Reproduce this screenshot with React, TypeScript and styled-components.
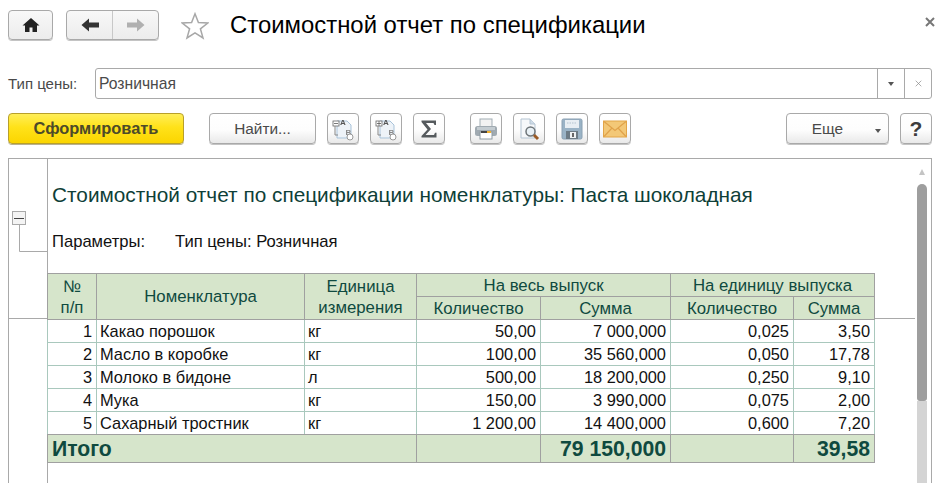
import React from "react";
import styled, { createGlobalStyle } from "styled-components";

const GlobalStyle = createGlobalStyle`
  html, body {
    margin: 0;
    padding: 0;
    background: #fff;
    overflow: hidden;
  }
  body {
    font-family: "Liberation Sans", Arial, sans-serif;
  }
`;

const Page = styled.div`
  width: 944px;
  height: 483px;
  overflow: hidden;
  padding: 10px 12px 0 8px;
  box-sizing: border-box;
  display: flex;
  flex-direction: column;
`;

const Header = styled.div`
  display: flex;
  align-items: center;
  height: 30px;
`;

const Btn = styled.button<{ $w?: number; $gap?: number }>`
  width: ${(p) => (p.$w ? `${p.$w}px` : "auto")};
  height: 31px;
  margin-left: ${(p) => p.$gap ?? 0}px;
  padding: 0;
  box-sizing: border-box;
  display: inline-flex;
  align-items: center;
  justify-content: center;
  flex: none;
  background: linear-gradient(#ffffff 0%, #fdfdfd 55%, #e9e9e9 100%);
  border: 1px solid #a9a9a9;
  border-radius: 4px;
  box-shadow: 0 1px 0 #c4c4c4;
  font: 15.4px "Liberation Sans", Arial, sans-serif;
  color: #4a4a4a;
`;

const HomeBtn = styled(Btn)`
  height: 30px;
  background: linear-gradient(#f8f8f8, #ececec);
`;

const NavGroup = styled.div`
  display: flex;
  width: 93px;
  height: 30px;
  margin-left: 13px;
  box-sizing: border-box;
  border: 1px solid #a9a9a9;
  border-radius: 4px;
  background: linear-gradient(#f8f8f8, #ececec);
  box-shadow: 0 1px 0 #c4c4c4;
`;

const NavCell = styled.div<{ $divider?: boolean }>`
  flex: 1;
  display: flex;
  align-items: center;
  justify-content: center;
  border-left: ${(p) => (p.$divider ? "1px solid #c8c8c8" : "none")};
`;

const StarWrap = styled.div`
  display: flex;
  margin-left: 22px;
  margin-top: 2px;
`;

const Title = styled.h1`
  margin: 0 0 0 21px;
  font-size: 23.9px;
  font-weight: 400;
  color: #000;
  white-space: nowrap;
`;

const CloseMark = styled.div`
  margin-left: auto;
  margin-right: -3px;
  margin-top: -6px;
  display: flex;
`;

const FilterRow = styled.div`
  display: flex;
  align-items: center;
  height: 31px;
  margin-top: 28px;
`;

const FieldLabel = styled.label`
  width: 87px;
  flex: none;
  font-size: 15px;
  color: #4a4a4a;
`;

const Field = styled.div`
  flex: 1;
  height: 31px;
  box-sizing: border-box;
  display: flex;
  align-items: stretch;
  border: 1px solid #a9a9a9;
  border-radius: 3px;
`;

const FieldValue = styled.div`
  flex: 1;
  padding-left: 3px;
  display: flex;
  align-items: center;
  font-size: 15.7px;
  color: #4a4a4a;
`;

const FieldAction = styled.div`
  width: 26px;
  display: flex;
  align-items: center;
  justify-content: center;
  border-left: 1px solid #a9a9a9;
`;

const ActionRow = styled.div`
  display: flex;
  align-items: center;
  margin-top: 14px;
  height: 31px;
`;

const PrimaryBtn = styled(Btn)`
  background: linear-gradient(#ffee58 0%, #ffe21a 45%, #fbd500 100%);
  border-color: #b8a02a;
  box-shadow: 0 1px 0 #b9b190;
  font-size: 16.4px;
  font-weight: 700;
  color: #4c4a2a;
`;

const IconBtn = styled(Btn)`
  width: 32px;
`;

const Spacer = styled.div`
  flex: 1;
`;

const MoreBtn = styled(Btn)`
  position: relative;
  padding-right: 20px;
`;

const MoreCaret = styled.span`
  position: absolute;
  right: 7px;
  top: 15px;
  border: 3.5px solid transparent;
  border-top: 4px solid #555;
  border-bottom: 0;
`;

const HelpBtn = styled(Btn)`
  font-size: 21px;
  font-weight: 700;
  color: #3d3d3d;
`;

const ReportFrame = styled.div`
  position: relative;
  flex: 1;
  margin-top: 14px;
  display: flex;
  border: 1px solid #a9a9a9;
  border-bottom: none;
  width: 924px;
  box-sizing: border-box;
`;

const OutlineRule = styled.div`
  position: absolute;
  top: 159px;
  left: 0;
  width: 906px;
  height: 1px;
  background: #a9a9a9;
`;

const Gutter = styled.div`
  width: 39px;
  flex: none;
  box-sizing: border-box;
  border-right: 1px solid #a9a9a9;
  padding-top: 52px;
  padding-left: 3px;
`;

const ReportBody = styled.div`
  position: relative;
  flex: 1;
  min-width: 0;
`;

const ReportTitle = styled.div`
  margin: 24px 0 0 4px;
  font-size: 20.8px;
  line-height: 24px;
  color: #0f3f38;
  white-space: nowrap;
`;

const Params = styled.div`
  display: flex;
  margin: 25px 0 0 4px;
  font-size: 16.6px;
  line-height: 19px;
  color: #111;
`;

const ParamName = styled.span`
  width: 123px;
`;

const Table = styled.table`
  position: relative;
  margin: 22px 0 0 -1px;
  width: 828px;
  table-layout: fixed;
  border-collapse: collapse;
  font-size: 16.4px;
`;

const Th = styled.th`
  height: 22px;
  padding: 0;
  font-size: 16.8px;
  font-weight: 400;
  background: #d6e5cb;
  color: #0f4a3f;
  border: 1px solid #a0a0a0;
  text-align: center;
  line-height: 21px;
`;

const Td = styled.td<{ $right?: boolean }>`
  height: 22px;
  padding: 0 4px 0 3px;
  line-height: 20px;
  background: #fff;
  color: #111;
  border: 1px solid #a9c8bd;
  text-align: ${(p) => (p.$right ? "right" : "left")};
  white-space: nowrap;
`;

const BodyRow = styled.tr`
  &:first-child td {
    border-top-color: #a0a0a0;
  }
  &:last-child td {
    border-bottom-color: #a0a0a0;
  }
`;

const TotalCell = styled.td<{ $right?: boolean }>`
  height: 27px;
  padding: 0 4px;
  line-height: 24px;
  background: #d6e5cb;
  color: #0f4a3f;
  border: 1px solid #a0a0a0;
  font-size: 21.2px;
  font-weight: 700;
  text-align: ${(p) => (p.$right ? "right" : "left")};
  white-space: nowrap;
`;

const Scroll = styled.div`
  width: 10px;
  flex: none;
  margin-right: 4px;
  margin-left: 3px;
  display: flex;
  flex-direction: column;
  align-items: center;
`;

const ScrollUp = styled.div`
  margin-top: 10px;
  border: 3.5px solid transparent;
  border-bottom: 6px solid #c4c4c4;
  border-top: 0;
`;

const ScrollThumb = styled.div`
  margin-top: 9px;
  width: 100%;
  height: 217px;
  background: #9e9e9e;
  border-radius: 5px 5px 3px 3px;
  flex: none;
`;

const ScrollTrack = styled.div`
  width: 100%;
  flex: 1;
  background: #d4d4d4;
`;

const SoftIcon = styled.svg`
  display: block;
  filter: blur(0.45px);
`;

const HomeIcon = () => (
  <SoftIcon width="18" height="16" viewBox="0 0 18 16">
    <path d="M9 1 L17.5 8.5 H15 V15 H10.5 V10.5 H7.5 V15 H3 V8.5 H.5 Z" fill="#222" />
  </SoftIcon>
);

const ArrowIcon = ({ right, color }: { right?: boolean; color: string }) => (
  <SoftIcon width="18" height="14" viewBox="0 0 18 14" style={right ? { transform: "scaleX(-1)" } : undefined}>
    <path d="M8 .5 V4.5 H18 V9.5 H8 V13.5 L.5 7 Z" fill={color} />
  </SoftIcon>
);

const StarIcon = () => (
  <svg width="28" height="28" viewBox="0 0 28 28" style={{ display: "block" }}>
    <path
      d="M14 1.8 L17.4 10.6 L26.8 11 L19.4 16.8 L22 26 L14 20.8 L6 26 L8.6 16.8 L1.2 11 L10.6 10.6 Z"
      fill="#fff"
      stroke="#a8a8a8"
      strokeWidth="1.5"
      strokeLinejoin="miter"
    />
  </svg>
);

const CrossIcon = ({ size, color, width }: { size: number; color: string; width: number }) => (
  <svg width={size} height={size} viewBox="0 0 10 10" style={{ display: "block" }}>
    <path d="M1 1 L9 9 M9 1 L1 9" stroke={color} strokeWidth={width} />
  </svg>
);

const DownCaret = () => (
  <svg width="6" height="4" viewBox="0 0 6 4" style={{ display: "block" }}>
    <path d="M0 0 H6 L3 4 Z" fill="#555" />
  </svg>
);

const GroupsIcon = ({ plus }: { plus?: boolean }) => (
  <SoftIcon width="22" height="24" viewBox="0 0 22 24">
    <path d="M5 4 H15 L19 8 V21 H5 Z" fill="#eef3f8" stroke="#a9c3da" />
    <rect x="1" y="4" width="6" height="5" fill="#fff" stroke="#666" strokeWidth=".8" />
    {plus && <path d="M4 4 V9" stroke="#666" strokeWidth=".8" />}
    <path d="M2 6.5 H6" stroke="#555" strokeWidth=".8" />
    <path d="M3 9 V18 H6" fill="none" stroke="#888" />
    <text x="8" y="8" fontSize="8" fontWeight="700" fontFamily="Liberation Sans" fill="#555">A</text>
    <text x="13.5" y="18" fontSize="8" fontWeight="700" fontFamily="Liberation Sans" fill="#888">B</text>
    <circle cx="18" cy="20" r="3" fill="#fff" stroke="#999" />
  </SoftIcon>
);

const SigmaIcon = () => (
  <SoftIcon width="20" height="20" viewBox="0 0 20 20">
    <path d="M2.5 1.5 H17 V6 H15.5 L14.5 4 H7 L12 10 L6.5 16 H15 L16 13.8 H17.5 V18.5 H2.5 V17 L8.5 10.5 L2.5 3 Z" fill="#555a5d" />
  </SoftIcon>
);

const PrintIcon = () => (
  <SoftIcon width="24" height="22" viewBox="0 0 24 22">
    <rect x="6" y="1" width="12" height="8" fill="#f2f2f2" stroke="#a2adb4" />
    <rect x="1" y="8" width="22" height="10" rx="2.5" fill="#a0aab1" />
    <rect x="3" y="9" width="18" height="3" fill="#c4ccd1" />
    <rect x="6" y="14" width="12" height="7" fill="#fff" stroke="#8e9aa2" />
    <rect x="7" y="13" width="6" height="2" fill="#444" />
    <rect x="13" y="13" width="4" height="2" fill="#f0b030" />
  </SoftIcon>
);

const PreviewIcon = () => (
  <SoftIcon width="22" height="24" viewBox="0 0 22 24">
    <path d="M3 2 H12 L17 7 V21 H3 Z" fill="#f6f8fa" stroke="#b4c4d2" />
    <path d="M12 2 V7 H17" fill="#cfdce8" stroke="#b4c4d2" />
    <circle cx="12.5" cy="14.5" r="4.5" fill="#e9f1f6" stroke="#6d7478" strokeWidth="1.5" />
    <path d="M16 18 L20 22" stroke="#9a5a25" strokeWidth="3" />
  </SoftIcon>
);

const SaveIcon = () => (
  <SoftIcon width="22" height="22" viewBox="0 0 22 22">
    <rect x="1" y="1" width="20" height="20" rx="1.5" fill="#9ab3c6" stroke="#8aa0b2" />
    <rect x="4" y="2" width="14" height="8" fill="#e8eef3" />
    <path d="M6 5 H16" stroke="#b4c3cf" strokeDasharray="1.5 1" />
    <rect x="5" y="13" width="12" height="8" fill="#6d7b85" />
    <rect x="9" y="14" width="6" height="6" fill="#eef2f4" />
    <rect x="11" y="15" width="2" height="4" fill="#666" />
  </SoftIcon>
);

const MailIcon = () => (
  <SoftIcon width="24" height="18" viewBox="0 0 24 18">
    <rect x=".5" y="1" width="23" height="16" fill="#f3c877" stroke="#e2a548" />
    <path d="M1 1.5 L12 10.5 L23 1.5 M1 16.5 L9 8 M23 16.5 L15 8" fill="none" stroke="#e0a24a" strokeWidth="1.2" />
  </SoftIcon>
);

const OutlineToggle = () => (
  <svg width="36" height="42" viewBox="0 0 36 42" style={{ display: "block" }}>
    <rect x=".5" y=".5" width="13" height="13" fill="#f4f4f4" stroke="#a9a9a9" />
    <path d="M2 7.5 H12" stroke="#444" />
    <path d="M7.5 14 V40.5 H36" fill="none" stroke="#a9a9a9" />
  </svg>
);

type Row = { n: number; name: string; unit: string; qty: string; sum: string; unitQty: string; unitSum: string };

const rows: Row[] = [
  { n: 1, name: "Какао порошок", unit: "кг", qty: "50,00", sum: "7 000,000", unitQty: "0,025", unitSum: "3,50" },
  { n: 2, name: "Масло в коробке", unit: "кг", qty: "100,00", sum: "35 560,000", unitQty: "0,050", unitSum: "17,78" },
  { n: 3, name: "Молоко в бидоне", unit: "л", qty: "500,00", sum: "18 200,000", unitQty: "0,250", unitSum: "9,10" },
  { n: 4, name: "Мука", unit: "кг", qty: "150,00", sum: "3 990,000", unitQty: "0,075", unitSum: "2,00" },
  { n: 5, name: "Сахарный тростник", unit: "кг", qty: "1 200,00", sum: "14 400,000", unitQty: "0,600", unitSum: "7,20" },
];

const columns = [49, 208, 112, 124, 130, 123, 81];

export default function App() {
  return (
    <Page>
      <GlobalStyle />
      <Header>
        <HomeBtn $w={45}>
          <HomeIcon />
        </HomeBtn>
        <NavGroup>
          <NavCell>
            <ArrowIcon color="#333" />
          </NavCell>
          <NavCell $divider>
            <ArrowIcon right color="#b0b0b0" />
          </NavCell>
        </NavGroup>
        <StarWrap>
          <StarIcon />
        </StarWrap>
        <Title>Стоимостной отчет по спецификации</Title>
        <CloseMark>
          <CrossIcon size={10} color="#777" width={2} />
        </CloseMark>
      </Header>

      <FilterRow>
        <FieldLabel>Тип цены:</FieldLabel>
        <Field>
          <FieldValue>Розничная</FieldValue>
          <FieldAction>
            <DownCaret />
          </FieldAction>
          <FieldAction>
            <CrossIcon size={7} color="#888" width={1} />
          </FieldAction>
        </Field>
      </FilterRow>

      <ActionRow>
        <PrimaryBtn $w={176}>Сформировать</PrimaryBtn>
        <Btn $w={107} $gap={25}>Найти...</Btn>
        <IconBtn $gap={11}><GroupsIcon /></IconBtn>
        <IconBtn $gap={11}><GroupsIcon plus /></IconBtn>
        <IconBtn $gap={11}><SigmaIcon /></IconBtn>
        <IconBtn $gap={25}><PrintIcon /></IconBtn>
        <IconBtn $gap={11}><PreviewIcon /></IconBtn>
        <IconBtn $gap={11}><SaveIcon /></IconBtn>
        <IconBtn $gap={11}><MailIcon /></IconBtn>
        <Spacer />
        <MoreBtn $w={103}>
          Еще
          <MoreCaret />
        </MoreBtn>
        <HelpBtn $w={32} $gap={11}>?</HelpBtn>
      </ActionRow>

      <ReportFrame>
        <OutlineRule />
        <Gutter>
          <OutlineToggle />
        </Gutter>
        <ReportBody>
          <ReportTitle>Стоимостной отчет по спецификации номенклатуры: Паста шоколадная</ReportTitle>
          <Params>
            <ParamName>Параметры:</ParamName>
            <span>Тип цены: Розничная</span>
          </Params>
          <Table>
            <colgroup>
              {columns.map((w, i) => (
                <col key={i} style={{ width: w }} />
              ))}
            </colgroup>
            <thead>
              <tr>
                <Th rowSpan={2}>№<br />п/п</Th>
                <Th rowSpan={2}>Номенклатура</Th>
                <Th rowSpan={2}>Единица<br />измерения</Th>
                <Th colSpan={2}>На весь выпуск</Th>
                <Th colSpan={2}>На единицу выпуска</Th>
              </tr>
              <tr>
                <Th>Количество</Th>
                <Th>Сумма</Th>
                <Th>Количество</Th>
                <Th>Сумма</Th>
              </tr>
            </thead>
            <tbody>
              {rows.map((r) => (
                <BodyRow key={r.n}>
                  <Td $right>{r.n}</Td>
                  <Td>{r.name}</Td>
                  <Td>{r.unit}</Td>
                  <Td $right>{r.qty}</Td>
                  <Td $right>{r.sum}</Td>
                  <Td $right>{r.unitQty}</Td>
                  <Td $right>{r.unitSum}</Td>
                </BodyRow>
              ))}
            </tbody>
            <tfoot>
              <tr>
                <TotalCell colSpan={3}>Итого</TotalCell>
                <TotalCell />
                <TotalCell $right>79 150,000</TotalCell>
                <TotalCell />
                <TotalCell $right>39,58</TotalCell>
              </tr>
            </tfoot>
          </Table>
        </ReportBody>
        <Scroll>
          <ScrollUp />
          <ScrollThumb />
          <ScrollTrack />
        </Scroll>
      </ReportFrame>
    </Page>
  );
}
